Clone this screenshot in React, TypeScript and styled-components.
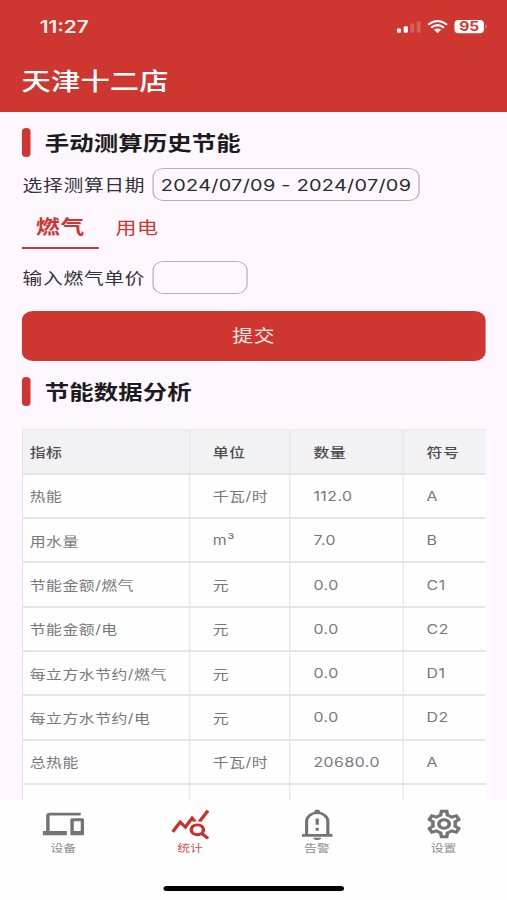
import React from 'react';
import styled, { createGlobalStyle } from 'styled-components';
import { MdDevices, MdQueryStats, MdOutlineSettings } from 'react-icons/md';

const RED = '#cd3730';
const STRETCH = 1.22;

const GlobalStyle = createGlobalStyle`
  * { box-sizing: border-box; }
  html, body { margin: 0; padding: 0; overflow: hidden; background: #fef7ff; }
  body { font-family: Inter, "Noto Sans CJK SC", sans-serif; }
`;

/* The phone layout is narrower than the window and is widened to fill it. */
const Phone = styled.div`
  width: calc(507px / ${STRETCH});
  height: 900px;
  transform: scaleX(${STRETCH});
  transform-origin: 0 0;
  display: flex;
  flex-direction: column;
  overflow: hidden;
  background: #fef7ff;
  color: #1d1b20;
`;

const Header = styled.header`
  height: 111.5px;
  flex: none;
  background: ${RED};
  color: #fff;
`;

const StatusBar = styled.div`
  display: flex;
  align-items: center;
  justify-content: space-between;
  height: 53px;
  padding: 0 16px 0 32.5px;
`;

const Clock = styled.span`
  font-size: 17px;
  font-weight: 600;
  color: #fff0ee;
`;

const StatusIcons = styled.svg`
  display: block;
  width: 75.4px;
  height: 18px;
`;

const Title = styled.h1`
  margin: 0;
  padding-left: 17.6px;
  height: 53px;
  display: flex;
  align-items: center;
  font-size: 24px;
  font-weight: 500;
  letter-spacing: 0.15px;
`;

const Content = styled.main`
  flex: 1;
  min-height: 0;
  overflow: hidden;
  padding: 16.5px 18px 0 18.4px;
`;

const Heading = styled.h2`
  margin: 0;
  height: 29px;
  display: flex;
  align-items: center;
  gap: 11.2px;
  font-size: 20px;
  font-weight: 700;
  line-height: 29px;
  letter-spacing: 0.1px;
  &::before {
    content: '';
    width: 7px;
    height: 29px;
    border-radius: 3.5px;
    background: ${RED};
  }
`;

const HeadingText = styled.span`
  padding-top: 3px;
`;

const Field = styled.div<{ $top: number }>`
  display: flex;
  align-items: center;
  height: 33px;
  margin-top: ${(p) => p.$top}px;
`;

const Label = styled.label`
  width: 106.6px;
  padding-bottom: 2px;
  font-size: 16.2px;
  letter-spacing: 0.6px;
  white-space: nowrap;
  color: #343138;
`;

const Box = styled.div<{ $width: number }>`
  width: ${(p) => p.$width}px;
  height: 33px;
  display: flex;
  align-items: center;
  justify-content: center;
  border: 1.3px solid #b3afb6;
  border-radius: 9px;
  padding-top: 1px;
  font-size: 16.3px;
  letter-spacing: 0.23px;
  white-space: nowrap;
  color: #2c2930;
`;

const Tabs = styled.div`
  display: flex;
  height: 47.5px;
`;

const Tab = styled.div<{ $active?: boolean }>`
  display: flex;
  align-items: center;
  justify-content: center;
  width: ${(p) => (p.$active ? 62.5 : 63)}px;
  padding-top: ${(p) => (p.$active ? 4 : 5)}px;
  border-bottom: 2px solid ${(p) => (p.$active ? RED : 'transparent')};
  color: ${RED};
  font-size: ${(p) => (p.$active ? 19.5 : 17.2)}px;
  font-weight: ${(p) => (p.$active ? 700 : 400)};
  letter-spacing: 0.6px;
`;

const Submit = styled.button`
  display: block;
  width: 100%;
  height: 49.5px;
  margin: 17px 0 16.5px;
  padding: 0 0 2px;
  border: 0;
  border-radius: 9px;
  background: ${RED};
  color: #ffe9e6;
  font: inherit;
  font-size: 17px;
  letter-spacing: 0.6px;
`;

const Table = styled.div`
  margin-top: 23px;
  border-left: 1px solid #e3e1e5;
  border-top: 1px solid #e9e7eb;
`;

const Row = styled.div<{ $head?: boolean }>`
  display: grid;
  grid-template-columns: 136.5px 82.5px 92.8px 1fr;
  height: ${(p) => (p.$head ? 44.8 : 44.3)}px;
  background: ${(p) => (p.$head ? '#f2f1f3' : '#fefefe')};
  border-bottom: 2px solid #e5e5e7;
  color: ${(p) => (p.$head ? '#4e4c50' : '#79777a')};
  font-size: 13px;
  font-weight: ${(p) => (p.$head ? 500 : 400)};
  letter-spacing: 0.4px;
`;

const Cell = styled.div`
  display: flex;
  align-items: center;
  padding-left: 18.5px;
  white-space: nowrap;
  border-right: 1px solid #e6e6e8;
  &:first-child { padding-left: 5px; }
  &:last-child { border-right: 0; }
`;

const Nav = styled.nav`
  flex: none;
  height: 100.5px;
  background: #fefefe;
  display: grid;
  grid-template-columns: repeat(4, 1fr);
  grid-template-rows: 81px 1fr;
`;

const NavItem = styled.a<{ $active?: boolean }>`
  display: flex;
  flex-direction: column;
  align-items: center;
  padding-top: 7px;
  color: ${(p) => (p.$active ? '#c9302b' : '#757375')};
  font-size: 10.6px;
  line-height: 14px;
  svg { display: block; width: 34px; height: 34px; }
`;

const NavLabel = styled.span`
  margin-top: 1.5px;
  opacity: 0.82;
`;

const HomeIndicator = styled.div`
  grid-column: 1 / -1;
  justify-self: center;
  width: 148px;
  height: 5.5px;
  margin-top: 5px;
  border-radius: 3px;
  background: #000;
`;

const columns = ['指标', '单位', '数量', '符号'];
const rows = [
  ['热能', '千瓦/时', '112.0', 'A'],
  ['用水量', 'm³', '7.0', 'B'],
  ['节能金额/燃气', '元', '0.0', 'C1'],
  ['节能金额/电', '元', '0.0', 'C2'],
  ['每立方水节约/燃气', '元', '0.0', 'D1'],
  ['每立方水节约/电', '元', '0.0', 'D2'],
  ['总热能', '千瓦/时', '20680.0', 'A'],
  ['', '', '', ''],
];

function BellAlert() {
  return (
    <svg viewBox="0 0 34 34" fill="none" stroke="currentColor" strokeWidth="2.6">
      <path d="M8.3 28V14.5a8.7 8.7 0 0 1 17.4 0V28" />
      <path d="M4.5 28.4h25" />
      <path d="M17 11.5v6.3M17 20.8v3" />
      <path d="M17 2.6a2.3 2.3 0 0 1 2.3 2.3v1.6h-4.6V4.9A2.3 2.3 0 0 1 17 2.6zM13.8 30.8h6.4a3.2 2.2 0 0 1-6.4 0z" fill="currentColor" stroke="none" />
    </svg>
  );
}

const tabs = [
  { label: '设备', Icon: MdDevices },
  { label: '统计', Icon: MdQueryStats, active: true },
  { label: '告警', Icon: BellAlert },
  { label: '设置', Icon: MdOutlineSettings },
];

function Status() {
  return (
    <StatusIcons viewBox="0 0 92 18" preserveAspectRatio="none">
      <g fill="#fff">
        <rect x="1.7" y="10.5" width="4" height="4.3" rx="1" />
        <rect x="8.4" y="8.3" width="4.2" height="6.5" rx="1" />
        <rect x="15" y="5.5" width="4" height="9.3" rx="1" opacity=".2" />
        <rect x="21.4" y="3" width="4" height="11.8" rx="1" opacity=".2" />
        <path d="M42.3 15.2 38.6 11.6Q42.3 9.2 46 11.6Z" />
        <rect x="59.2" y="2" width="29.5" height="13.2" rx="4" />
        <path d="M90.2 6q2.6 2.6 0 5.2z" opacity=".4" />
      </g>
      <g fill="none" stroke="#fff" strokeWidth="2">
        <path d="M32.8 6.8Q42.3-.8 51.8 6.8" />
        <path d="M35.9 9.6Q42.3 4.6 48.7 9.6" />
      </g>
      <text
        x="74"
        y="13"
        textAnchor="middle"
        fontSize="12.5"
        fontWeight="700"
        textLength="20"
        lengthAdjust="spacingAndGlyphs"
        fill={RED}
      >
        95
      </text>
    </StatusIcons>
  );
}

export default function App() {
  return (
    <>
      <GlobalStyle />
      <Phone>
        <Header>
          <StatusBar>
            <Clock>11:27</Clock>
            <Status />
          </StatusBar>
          <Title>天津十二店</Title>
        </Header>
        <Content>
          <Heading>
            <HeadingText>手动测算历史节能</HeadingText>
          </Heading>
          <Field $top={11}>
            <Label>选择测算日期</Label>
            <Box $width={219}>2024/07/09 - 2024/07/09</Box>
          </Field>
          <Tabs>
            <Tab $active>燃气</Tab>
            <Tab>用电</Tab>
          </Tabs>
          <Field $top={12.5}>
            <Label>输入燃气单价</Label>
            <Box $width={78} />
          </Field>
          <Submit>提交</Submit>
          <Heading>
            <HeadingText>节能数据分析</HeadingText>
          </Heading>
          <Table>
            <Row $head>
              {columns.map((c) => (
                <Cell key={c}>{c}</Cell>
              ))}
            </Row>
            {rows.map((row, i) => (
              <Row key={i}>
                {row.map((value, j) => (
                  <Cell key={j}>{value}</Cell>
                ))}
              </Row>
            ))}
          </Table>
        </Content>
        <Nav>
          {tabs.map(({ label, Icon, active }) => (
            <NavItem key={label} $active={active}>
              <Icon />
              <NavLabel>{label}</NavLabel>
            </NavItem>
          ))}
          <HomeIndicator />
        </Nav>
      </Phone>
    </>
  );
}
